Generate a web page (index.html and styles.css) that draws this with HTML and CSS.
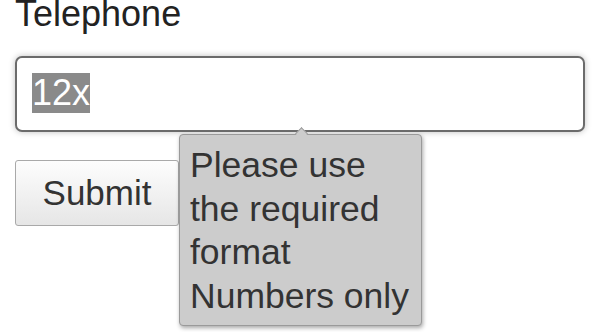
FILE: index.html
```html
<!DOCTYPE html>
<html lang="en">
<head>
    <meta charset="UTF-8" />
    <meta name="viewport" content="width=device-width, initial-scale=1.0" />
    <title>Telephone</title>
    <link rel="stylesheet" href="styles.css">
</head>
<body>
    <form class="phone-form">
        <label class="field-label" for="tel">Telephone</label>
        <div class="tel-input" id="tel">
            <span class="selected">12x</span>
        </div>
        <div class="actions">
            <button type="button" class="submit-btn">Submit</button>
            <!-- validation bubble -->
            <div class="bubble">
                <span class="bubble-arrow"></span>
                Please use<br>the required<br>format<br>Numbers only
            </div>
        </div>
    </form>
</body>
</html>
```

FILE: styles.css
```css
* {
    margin: 0;
    padding: 0;
    box-sizing: border-box;
}

html, body {
    min-height: 332px;
}

body {
    font-family: "Liberation Sans", Arial, sans-serif;
    font-size: 36px;
    background-color: #fff;
    color: #222;
}

.phone-form {
    padding: 0 17px 0 15px;
}

.field-label {
    display: block;
    margin-top: -7px;
    line-height: 41px;
    color: #222;
}

.tel-input {
    margin-top: 22px;
    height: 76px;
    border: 2px solid #6b6b6b;
    border-radius: 7px;
    padding: 15px 15px;
    box-shadow: 0 0 6px rgba(0, 0, 0, 0.25);
    line-height: 40px;
    background-color: #fff;
}

.tel-input .selected {
    display: inline-block;
    background-color: #8a8a8a;
    color: #fff;
    line-height: 40px;
}

.actions {
    margin-top: 28px;
    display: flex;
    align-items: flex-start;
}

.submit-btn {
    width: 164px;
    height: 66px;
    font-family: inherit;
    font-size: 35px;
    color: #333;
    background: linear-gradient(#fdfdfd, #e6e6e6);
    border: 1px solid #a9a9a9;
    border-radius: 3px;
}

.bubble {
    position: relative;
    margin-top: -26px;
    width: 243px;
    height: 192px;
    padding: 9px 8px 0 10px;
    background-color: #cccccc;
    border: 1px solid #9a9a9a;
    border-radius: 4px;
    box-shadow: 1px 2px 4px rgba(0, 0, 0, 0.35);
    color: #333;
    font-size: 35.5px;
    line-height: 43.5px;
    white-space: nowrap;
}

.bubble-arrow {
    position: absolute;
    top: -6px;
    left: 117px;
    width: 9px;
    height: 9px;
    background-color: #cccccc;
    border-left: 1px solid #9a9a9a;
    border-top: 1px solid #9a9a9a;
    transform: rotate(45deg);
}
```
